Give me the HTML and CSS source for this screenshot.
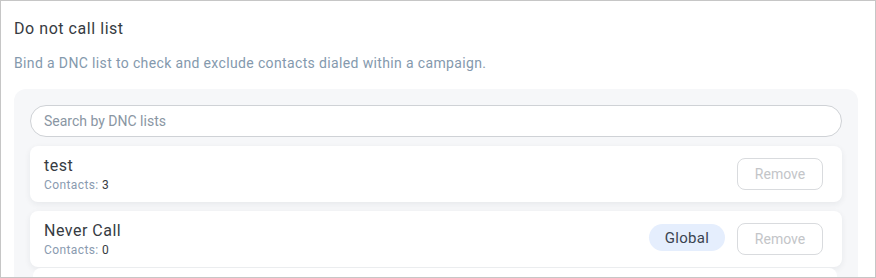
FILE: index.html
```html
<!DOCTYPE html>
<html>
<head>
<meta charset="utf-8">
<link rel="stylesheet" href="styles.css">
</head>
<body>
<div class="frame">
  <div class="title">Do not call list</div>
  <div class="subtitle">Bind a DNC list to check and exclude contacts dialed within a campaign.</div>
  <div class="panel">
    <input class="search" type="text" placeholder="Search by DNC lists">
    <div class="card">
      <div class="info">
        <div class="name">test</div>
        <div class="contacts">Contacts: <span class="num">3</span></div>
      </div>
      <div class="actions">
        <button class="remove">Remove</button>
      </div>
    </div>
    <div class="card">
      <div class="info">
        <div class="name">Never Call</div>
        <div class="contacts">Contacts: <span class="num">0</span></div>
      </div>
      <div class="actions">
        <span class="badge">Global</span>
        <button class="remove">Remove</button>
      </div>
    </div>
    <div class="card next"></div>
  </div>
</div>
</body>
</html>
```

FILE: styles.css
```css
* { box-sizing: border-box; }
html, body { margin: 0; padding: 0; background: #fff; }
body { font-family: Roboto, "Noto Sans", sans-serif; }
.frame {
  width: 876px;
  height: 278px;
  border: 1px solid #c6c6c6;
  padding: 16px 17px 0 13px;
  overflow: hidden;
}
.title {
  font-size: 16px;
  line-height: 24px;
  letter-spacing: 0.55px;
  color: #363b42;
}
.subtitle {
  margin-top: 12px;
  font-size: 14px;
  line-height: 20px;
  letter-spacing: 0.36px;
  color: #8499ad;
}
.panel {
  margin-top: 16px;
  background: #f6f7f9;
  border-radius: 12px;
  padding: 16px 16px 0 16px;
  height: 200px;
}
.search {
  display: block;
  width: 100%;
  height: 32px;
  border: 1px solid #cfd2d6;
  border-radius: 16px;
  padding: 0 13px;
  font-family: inherit;
  font-size: 14px;
  color: #333;
  background: #fff;
  outline: none;
}
.search::placeholder { color: #8a96a3; }
.card {
  margin-top: 9px;
  height: 56px;
  background: #fff;
  border-radius: 8px;
  box-shadow: 0 2px 6px rgba(30, 40, 60, 0.07);
  display: flex;
  align-items: center;
  justify-content: space-between;
  padding: 0 19px 0 14px;
}
.card.next {
  margin: 1px 5px 0 3px;
  box-shadow: none;
}
.info { display: flex; flex-direction: column; }
.name {
  font-size: 16px;
  line-height: 20px;
  letter-spacing: 0.5px;
  color: #363b42;
}
.contacts {
  font-size: 12px;
  line-height: 16px;
  letter-spacing: 0.4px;
  margin-top: 1px;
  color: #8a9bb0;
}
.num { color: #363b42; }
.actions { display: flex; align-items: center; gap: 12px; }
.badge {
  display: inline-flex;
  align-items: center;
  justify-content: center;
  width: 76px;
  height: 27px;
  border-radius: 14px;
  background: #e5eefd;
  color: #3a4350;
  font-size: 15px;
  letter-spacing: 0.3px;
  margin-top: -3px;
}
.remove {
  width: 86px;
  height: 32px;
  border: 1px solid #d9dbde;
  border-radius: 8px;
  background: #fff;
  color: #c3c5c8;
  font-family: inherit;
  font-size: 14px;
  padding: 0;
}
```
